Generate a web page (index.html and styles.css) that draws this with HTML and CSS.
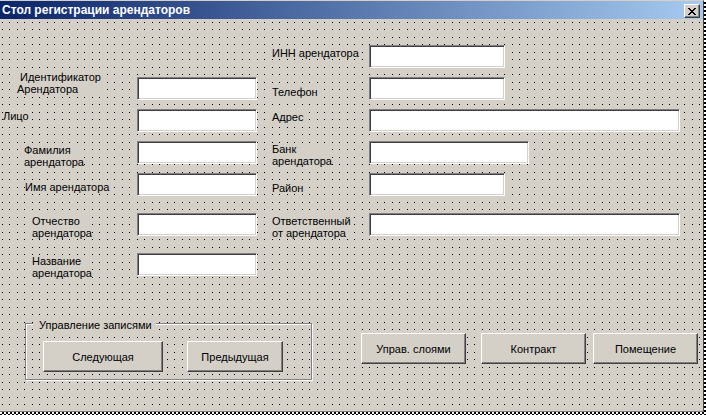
FILE: index.html
```html
<!DOCTYPE html>
<html lang="ru">
<head>
<meta charset="utf-8">
<title>Стол регистрации арендаторов</title>
<link rel="stylesheet" href="styles.css">
</head>
<body>
<div class="window">
  <div class="main">
    <div class="titlebar">
      <span class="title">Стол регистрации арендаторов</span>
      <button class="close" type="button" aria-label="Закрыть">
        <svg width="8" height="7" viewBox="0 0 8 7" shape-rendering="crispEdges"><path fill="#000" d="M0 0h2v1H0z M6 0h2v1H6z M1 1h2v1H1z M5 1h2v1H5z M2 2h4v1H2z M3 3h2v1H3z M2 4h4v1H2z M1 5h2v1H1z M5 5h2v1H5z M0 6h2v1H0z M6 6h2v1H6z"/></svg>
      </button>
    </div>
    <div class="form">
      <div class="fields">
        <div class="blank"></div>
        <div class="blank"></div>
        <label class="lbl r-inn">ИНН арендатора</label>
        <input class="tb tb-s" type="text">

        <label class="lbl l-id">Идентификатор<br>Арендатора</label>
        <input class="tb tb-left" type="text">
        <label class="lbl r-tel">Телефон</label>
        <input class="tb tb-s" type="text">

        <label class="lbl l-face">Лицо</label>
        <input class="tb tb-left" type="text">
        <label class="lbl r-addr">Адрес</label>
        <input class="tb tb-l" type="text">

        <label class="lbl l-fam">Фамилия<br>арендатора</label>
        <input class="tb tb-left" type="text">
        <label class="lbl r-bank">Банк<br>арендатора</label>
        <input class="tb tb-m" type="text">

        <label class="lbl l-name">Имя арендатора</label>
        <input class="tb tb-left" type="text">
        <label class="lbl r-dist">Район</label>
        <input class="tb tb-s" type="text">

        <label class="lbl l-patr">Отчество<br>арендатора</label>
        <input class="tb tb-left" type="text">
        <label class="lbl r-resp">Ответственный<br>от арендатора</label>
        <input class="tb tb-l" type="text">

        <label class="lbl l-title">Название<br>арендатора</label>
        <input class="tb tb-left" type="text">
      </div>
      <div class="bottom">
        <div class="frame">
          <span class="legend">Управление записями</span>
          <button class="btn btn-next" type="button">Следующая</button>
          <button class="btn btn-prev" type="button">Предыдущая</button>
        </div>
        <div class="actions">
          <button class="btn btn-act" type="button">Управ. слоями</button>
          <button class="btn btn-act btn-contract" type="button">Контракт</button>
          <button class="btn btn-act btn-room" type="button">Помещение</button>
        </div>
      </div>
    </div>
  </div>
</div>
</body>
</html>
```
FILE: styles.css
```css
* { box-sizing: border-box; }

html, body {
  margin: 0;
  padding: 0;
}

body {
  width: 706px;
  height: 415px;
  overflow: hidden;
  font-family: "Liberation Sans", Arial, sans-serif;
  font-size: 11px;
  color: #000;
  background: #d4d0c8;
}

.window {
  width: 706px;
  height: 415px;
  background: repeating-conic-gradient(#000 0 25%, #fff 0 50%) 0 0 / 4px 4px;
}

.main {
  width: 704px;
  height: 412px;
  display: flex;
  flex-direction: column;
  background: #d4d0c8;
  border-top: 1px solid #d4d0c8;
  border-right: 1px solid #404040;
  border-bottom: 1px solid #808080;
}

.titlebar {
  height: 18px;
  flex: none;
  display: flex;
  align-items: flex-start;
  background: linear-gradient(to right, #0a246a, #a6caf0);
}

.title {
  padding-left: 2px;
  line-height: 18px;
  font-weight: bold;
  font-size: 12px;
  color: #fff;
  white-space: nowrap;
}

.close {
  margin: 3px 3px 0 auto;
  width: 16px;
  height: 14px;
  padding: 0;
  display: flex;
  align-items: center;
  justify-content: center;
  background: #d4d0c8;
  border: 1px solid;
  border-color: #fff #404040 #404040 #fff;
  box-shadow: inset -1px -1px #808080;
}

.close svg { display: block; }

.form {
  flex: 1;
  display: flex;
  flex-direction: column;
  background:
    conic-gradient(from 270deg at 1px 1px, #000 90deg, transparent 0) 2px 3px / 15px 15px,
    conic-gradient(from 270deg at 1px 1px, #000 90deg, transparent 0) 9px 3px / 15px 15px,
    conic-gradient(from 270deg at 1px 1px, #000 90deg, transparent 0) 2px 10px / 15px 15px,
    conic-gradient(from 270deg at 1px 1px, #000 90deg, transparent 0) 9px 10px / 15px 15px,
    #d4d0c8;
}

.fields {
  padding-top: 26px;
  display: grid;
  grid-template-columns: 137px 120px 112px 1fr;
  grid-template-rows: 32px 32px 32px 32px 40px 40px 23px;
}

.lbl {
  justify-self: start;
  align-self: start;
  background: #d4d0c8;
  line-height: 12px;
  white-space: nowrap;
}

.l-id { margin: -6px 0 0 17px; text-indent: 3px; }
.l-face { margin: 1px 0 0 3px; }
.l-fam { margin: 3px 0 0 24px; }
.l-name { margin: 8px 0 0 25px; }
.l-patr { margin: 2px 0 0 32px; }
.l-title { margin: 2px 0 0 32px; }

.r-inn { margin: 2px 0 0 15px; }
.r-tel { margin: 9px 0 0 15px; }
.r-addr { margin: 2px 0 0 15px; }
.r-bank { margin: 2px 0 0 15px; }
.r-dist { margin: 9px 0 0 15px; }
.r-resp { margin: 2px 0 0 15px; }

.tb {
  align-self: start;
  justify-self: start;
  height: 23px;
  margin: 0;
  padding: 0 3px;
  font: inherit;
  background: #fff;
  border: 1px solid;
  border-color: #808080 #fff #fff #808080;
  box-shadow: inset 1px 1px #404040, inset -1px -1px #d4d0c8;
  outline: none;
}

.tb-left { width: 120px; }
.tb-s { width: 136px; }
.tb-m { width: 160px; }
.tb-l { width: 311px; }

.bottom {
  margin-top: 47px;
  display: flex;
  align-items: flex-start;
}

.frame {
  position: relative;
  margin-left: 25px;
  width: 287px;
  height: 57px;
  padding: 17px 0 0 17px;
  display: flex;
  align-items: flex-start;
  gap: 24px;
  border: 1px solid #808080;
  box-shadow: inset 1px 1px #fff, 1px 1px #fff;
}

.legend {
  position: absolute;
  top: -5px;
  left: 7px;
  padding: 0 4px 0 6px;
  line-height: 12px;
  background: #d4d0c8;
  white-space: nowrap;
}

.btn {
  height: 31px;
  padding: 0;
  font: inherit;
  color: #000;
  background: #d4d0c8;
  border: 1px solid;
  border-color: #fff #404040 #404040 #fff;
  box-shadow: inset -1px -1px #808080;
}

.btn-next { width: 120px; }
.btn-prev { width: 96px; }

.actions {
  margin: 10px 0 0 49px;
  display: flex;
  align-items: flex-start;
}

.btn-act { width: 105px; }
.btn-contract { margin-left: 15px; }
.btn-room { margin-left: 7px; }
```
